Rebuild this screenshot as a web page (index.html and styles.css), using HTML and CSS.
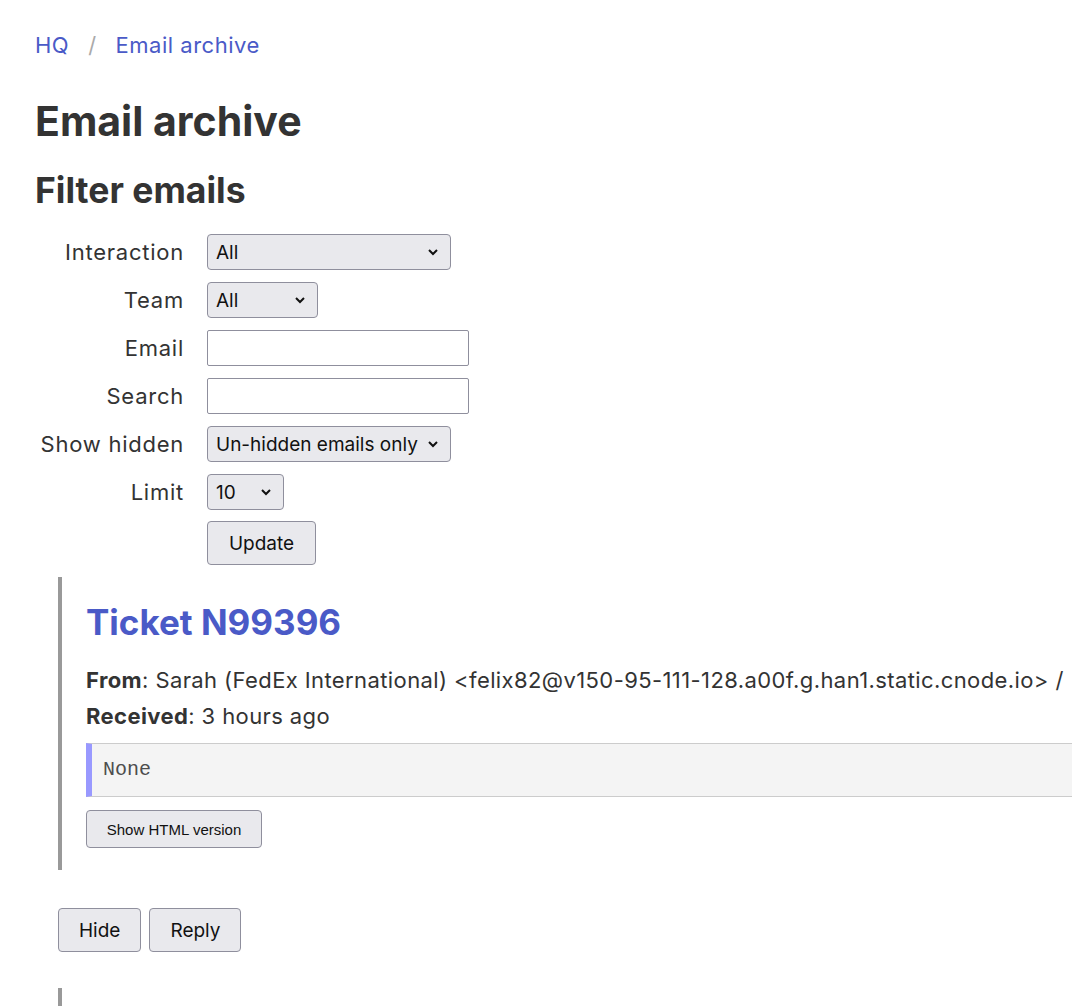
FILE: index.html
```html
<!DOCTYPE html>
<html lang="en">
<head>
<meta charset="utf-8">
<title>Email archive</title>
<link rel="stylesheet" href="styles.css">
</head>
<body>
<nav class="crumbs">
  <a href="#" class="crumb">HQ</a>
  <span class="sep">/</span>
  <a href="#" class="crumb">Email archive</a>
</nav>
<h1 class="title">Email archive</h1>
<h2 class="subtitle">Filter emails</h2>
<form class="filter">
  <label class="flabel">Interaction</label>
  <span class="sel sel-wide"><select><option>All</option></select><svg class="chev" viewBox="0 0 10 6"><path d="M1 1l4 4 4-4" fill="none" stroke="#111" stroke-width="2"/></svg></span>
  <label class="flabel">Team</label>
  <span class="sel sel-team"><select><option>All</option></select><svg class="chev" viewBox="0 0 10 6"><path d="M1 1l4 4 4-4" fill="none" stroke="#111" stroke-width="2"/></svg></span>
  <label class="flabel">Email</label>
  <input class="txt" type="text">
  <label class="flabel">Search</label>
  <input class="txt" type="text">
  <label class="flabel">Show hidden</label>
  <span class="sel sel-wide"><select><option>Un-hidden emails only</option></select><svg class="chev" viewBox="0 0 10 6"><path d="M1 1l4 4 4-4" fill="none" stroke="#111" stroke-width="2"/></svg></span>
  <label class="flabel">Limit</label>
  <span class="sel sel-limit"><select><option>10</option></select><svg class="chev" viewBox="0 0 10 6"><path d="M1 1l4 4 4-4" fill="none" stroke="#111" stroke-width="2"/></svg></span>
  <span></span>
  <button type="button" class="btn btn-update">Update</button>
</form>

<article class="email">
  <h2 class="ticket"><a href="#">Ticket N99396</a></h2>
  <p class="meta nowrap"><b>From</b>: Sarah (FedEx International) &lt;felix82@v150-95-111-128.a00f.g.han1.static.cnode.io&gt; /</p>
  <p class="meta"><b>Received</b>: 3 hours ago</p>
  <pre class="body">None</pre>
  <button type="button" class="btn-small">Show HTML version</button>
</article>
<div class="actions">
  <button type="button" class="btn btn-act">Hide</button>
  <button type="button" class="btn btn-act">Reply</button>
</div>
<article class="email email-next"></article>
</body>
</html>
```

FILE: styles.css
```css
html { overflow: hidden; }
body {
  margin: 0;
  padding: 30px 35px 0 35px;
  font-family: "Inter", "Liberation Sans", sans-serif;
  color: #333333;
  font-size: 22px;
  letter-spacing: 0.5px;
  background: #ffffff;
}
a { color: #4a5ac7; text-decoration: none; }

.crumbs {
  display: flex;
  align-items: center;
  gap: 19px;
  height: 30px;
  font-size: 22px;
}
.sep { color: #aaaaaa; }

.title {
  margin: 36px 0 0 0;
  font-size: 41px;
  line-height: 50px;
  font-weight: 700;
  letter-spacing: 0;
  color: #333333;
}
.subtitle {
  margin: 23px 0 0 0;
  font-size: 35.5px;
  line-height: 43px;
  font-weight: 700;
  letter-spacing: 0;
  color: #333333;
}

.filter {
  display: grid;
  grid-template-columns: 149px auto;
  column-gap: 23px;
  row-gap: 12px;
  margin-top: 22px;
  justify-items: start;
  align-items: center;
}
.flabel {
  justify-self: end;
  white-space: nowrap;
  font-size: 22px;
  letter-spacing: 0.75px;
  color: #333333;
}
.sel {
  position: relative;
  display: inline-block;
  height: 36px;
}
.sel select {
  appearance: none;
  -webkit-appearance: none;
  height: 36px;
  width: 100%;
  box-sizing: border-box;
  background: #e9e9ed;
  border: 1px solid #8f8f9d;
  border-radius: 4px;
  font-family: inherit;
  font-size: 19px;
  letter-spacing: 0;
  color: #111111;
  padding: 0 30px 0 8px;
}
.chev {
  position: absolute;
  right: 13px;
  top: 15px;
  width: 10px;
  height: 6px;
  overflow: visible;
  pointer-events: none;
}
.sel-wide { width: 244px; }
.sel-team { width: 111px; }
.sel-limit { width: 77px; }
.txt {
  width: 262px;
  height: 36px;
  box-sizing: border-box;
  border: 1px solid #8f8f9d;
  border-radius: 2px;
  background: #ffffff;
  font-family: inherit;
  font-size: 19px;
}
.btn {
  background: #e9e9ed;
  border: 1px solid #8f8f9d;
  border-radius: 4px;
  font-family: inherit;
  font-size: 19px;
  letter-spacing: 0;
  color: #111111;
  height: 44px;
  padding: 0 19px;
}
.btn-update { margin-top: -1px; width: 109px; }

.email {
  margin: 12px 0 0 23px;
  border-left: 4px solid #999999;
  padding: 24px 0 22px 24px;
  min-width: 1000px;
}
.ticket {
  margin: 0;
  font-size: 35px;
  line-height: 43px;
  font-weight: 700;
  letter-spacing: 0;
}
.ticket a { color: #4a5ac7; }
.meta {
  margin: 0;
  line-height: 36px;
  font-size: 22px;
  letter-spacing: 0.4px;
}
.ticket + .meta { margin-top: 18px; }
.meta b { font-weight: 700; color: #333333; }
.nowrap { white-space: nowrap; }
.body {
  margin: 9px 0 0 0;
  background: #f4f4f4;
  border-top: 1px solid #cccccc;
  border-bottom: 1px solid #cccccc;
  border-left: 6px solid #9999ff;
  padding: 0 0 0 11px;
  height: 52px;
  line-height: 52px;
  font-family: "Liberation Mono", monospace;
  font-size: 20px;
  letter-spacing: 0;
  color: #4d4d4d;
}
.btn-small {
  margin-top: 13px;
  background: #e9e9ed;
  border: 1px solid #8f8f9d;
  border-radius: 4px;
  font-family: "Liberation Sans", Arial, sans-serif;
  font-size: 15px;
  letter-spacing: 0;
  color: #111111;
  height: 38px;
  width: 176px;
}
.actions {
  display: flex;
  gap: 8px;
  margin: 38px 0 0 23px;
}
.btn-act { height: 44px; padding: 0 20px; }
.email-next { margin-top: 36px; height: 40px; padding: 0; min-width: 0; }
```
